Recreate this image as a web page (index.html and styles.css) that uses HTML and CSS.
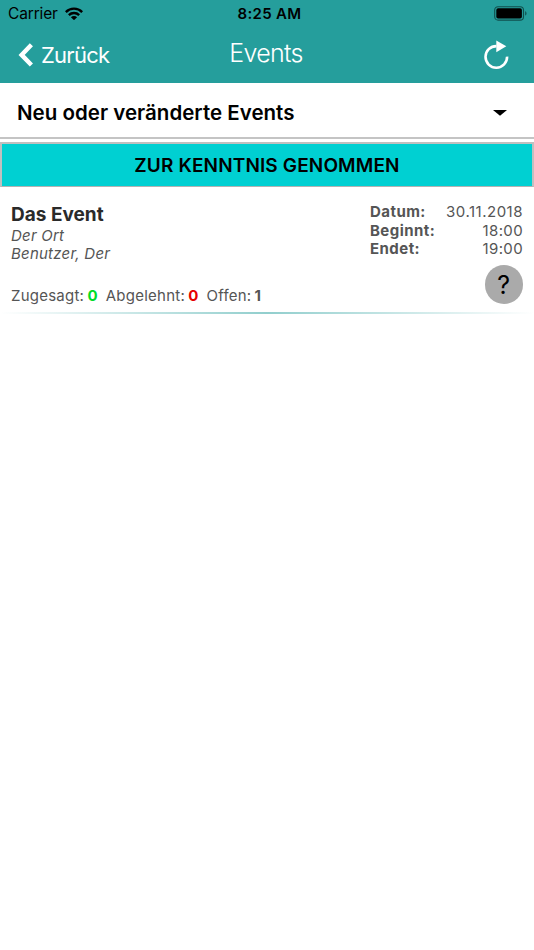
FILE: index.html
```html
<!DOCTYPE html>
<html lang="de">
<head>
    <meta charset="UTF-8">
    <title>Events</title>
    <link rel="stylesheet" href="styles.css">
</head>
<body>
    <div class="header">
        <div class="status">
            <div class="status-left">
                <span class="carrier">Carrier</span>
                <svg class="wifi" width="18" height="13" viewBox="0 0 18 13">
                    <path d="M0 4.2a12.7 12.7 0 0 1 18 0l-1.7 1.7a10.3 10.3 0 0 0-14.6 0z"/>
                    <path d="M3 7.2a8.5 8.5 0 0 1 12 0l-1.7 1.7a6.1 6.1 0 0 0-8.6 0z"/>
                    <path d="M5.9 10.2a4.4 4.4 0 0 1 6.2 0L9 13.2z"/>
                </svg>
            </div>
            <span class="time">8:25 AM</span>
            <div class="status-right">
                <svg width="34" height="15" viewBox="0 0 34 15">
                    <rect x="0.7" y="0.7" width="28.8" height="13.4" rx="3.4" fill="none" stroke="#104f4d" stroke-width="1.1"/>
                    <rect x="2.3" y="2.3" width="25.6" height="10.2" rx="1.8"/>
                    <path d="M31.2 5.2c1.7.4 1.7 4 0 4.4z" fill="#104f4d"/>
                </svg>
            </div>
        </div>
        <div class="navbar">
            <a class="back">
                <svg width="15" height="24" viewBox="0 0 15 24"><path d="M13.4 1.8L3.6 11.9L13.4 22" fill="none" stroke="#fff" stroke-width="4.4"/></svg>
                <span>Zurück</span>
            </a>
            <h1>Events</h1>
            <a class="reload">
                <svg width="26" height="30" viewBox="0 0 26 30">
                    <path d="M12.5 6.1A10.8 10.8 0 1 0 23.1 16.6" fill="none" stroke="#fff" stroke-width="2.6"/>
                    <path d="M12.3 0.6L22.3 6.3L12.3 12.2z" fill="#fff"/>
                </svg>
            </a>
        </div>
    </div>
    <div class="select">
        <span>Neu oder veränderte Events</span>
        <svg width="14" height="6" viewBox="0 0 14 6"><path d="M0 0h14L7 5.8z"/></svg>
    </div>
    <button class="confirm">ZUR KENNTNIS GENOMMEN</button>
    <div class="event">
        <div class="event-left">
            <h2>Das Event</h2>
            <p class="place">Der Ort</p>
            <p class="user">Benutzer, Der</p>
            <div class="counts">
                <span>Zugesagt:</span><b class="yes">0</b>
                <span>Abgelehnt:</span><b class="no">0</b>
                <span>Offen:</span><b>1</b>
            </div>
        </div>
        <div class="event-right">
            <dl>
                <dt>Datum:</dt><dd class="date">30.11.2018</dd>
                <dt>Beginnt:</dt><dd>18:00</dd>
                <dt>Endet:</dt><dd>19:00</dd>
            </dl>
            <div class="answer">?</div>
        </div>
    </div>
    <div class="line"></div>
</body>
</html>
```
FILE: styles.css
```css
*{
    padding: 0;
    margin: 0;
    box-sizing: border-box;
}
body{
    background: #ffffff;
    color: #000000;
    font-family: Inter, "Liberation Sans", sans-serif;
}
.header{
    height: 83px;
    background: #259e9c;
}
.status{
    display: grid;
    grid-template-columns: 1fr auto 1fr;
    height: 27px;
    padding: 0 6px 0 8px;
    align-items: center;
}
.status-left{
    display: flex;
    align-items: center;
    gap: 7px;
}
.carrier{
    font-size: 15.5px;
    letter-spacing: -0.15px;
}
.wifi{
    margin-bottom: 1px;
}
.time{
    font-size: 15px;
    font-weight: 600;
    letter-spacing: 0.3px;
    padding-left: 3px;
}
.status-right{
    display: flex;
    justify-content: flex-end;
}
.navbar{
    display: grid;
    grid-template-columns: 1fr auto 1fr;
    height: 56px;
    padding: 0 24px 0 18px;
    align-items: center;
    color: #ffffff;
}
.back{
    display: flex;
    align-items: center;
    gap: 8px;
    font-size: 22px;
    letter-spacing: -0.75px;
}
h1{
    font-size: 25px;
    font-weight: 300;
    line-height: 30px;
    letter-spacing: -0.7px;
    padding: 0 0 4px 4px;
}
.reload{
    display: flex;
    justify-content: flex-end;
}
.select{
    display: flex;
    justify-content: space-between;
    align-items: center;
    height: 56px;
    padding: 5px 27px 0 17px;
    border-bottom: 2px solid #c4c4c4;
    font-size: 20.5px;
    font-weight: 600;
    letter-spacing: 0.02px;
}
.confirm{
    display: block;
    width: 100%;
    height: 45px;
    margin-top: 3px;
    border: 2px solid #c0c0c0;
    border-bottom: 1px solid #b3b3b3;
    background: #00d0d2;
    color: #000000;
    font-family: inherit;
    font-size: 19px;
    font-weight: 600;
    letter-spacing: 0.14px;
}
.event{
    display: flex;
    justify-content: space-between;
    height: 125px;
    padding: 16px 11px 0;
    color: #555555;
    font-size: 15px;
}
h2{
    color: #2a2a2a;
    font-size: 19px;
    font-weight: 700;
    line-height: 24px;
}
.place,
.user{
    font-style: italic;
    line-height: 18.4px;
    letter-spacing: 0.23px;
}
.counts{
    display: flex;
    margin-top: 22px;
    line-height: 20px;
    letter-spacing: 0.24px;
}
.counts b{
    margin: 0 8px 0 3.2px;
}
.counts .yes{
    color: #00dc28;
}
.counts .no{
    color: #e60000;
}
.event-right{
    display: flex;
    flex-direction: column;
    align-items: flex-end;
}
dl{
    display: grid;
    grid-template-columns: auto auto;
    width: 153px;
    line-height: 18.6px;
}
dt{
    font-weight: 700;
    letter-spacing: 0.45px;
}
dd{
    text-align: right;
    letter-spacing: 0.35px;
}
.date{
    letter-spacing: 0.5px;
}
.answer{
    width: 38.5px;
    height: 38.5px;
    margin-top: 6.5px;
    border-radius: 50%;
    background: #aaaaaa;
    color: #000000;
    font-size: 25px;
    line-height: 40px;
    text-align: center;
}
.line{
    height: 2px;
    background: linear-gradient(to right, rgba(37,158,156,0), rgba(37,158,156,0.5) 50%, rgba(37,158,156,0));
}
```
